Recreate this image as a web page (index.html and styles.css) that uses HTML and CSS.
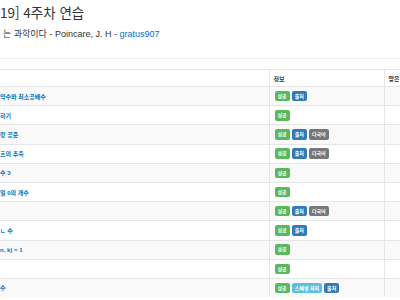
FILE: index.html
```html
<!DOCTYPE html>
<html lang="ko">
<head>
<meta charset="utf-8">
<title>4주차 연습</title>
<link rel="stylesheet" href="styles.css">
</head>
<body>
<div class="page">
  <header class="page-header">
    <h1 class="title">19] 4주차 연습</h1>
    <p class="quote">는 과학이다 - Poincare, J. H - <a class="user" href="#">gratus907</a></p>
  </header>
  <table class="problems">
    <colgroup>
      <col class="c-title">
      <col class="c-info">
      <col class="c-solved">
    </colgroup>
    <thead>
      <tr><th></th><th>정보</th><th>맞은</th></tr>
    </thead>
    <tbody>
      <tr><td><a href="#">약수와 최소공배수</a></td><td><span class="label ok">성공</span><span class="label src">출처</span></td><td></td></tr>
      <tr><td><a href="#">하기</a></td><td><span class="label ok">성공</span></td><td></td></tr>
      <tr><td><a href="#">랑 공준</a></td><td><span class="label ok">성공</span><span class="label src">출처</span><span class="label lang">다국어</span></td><td></td></tr>
      <tr><td><a href="#">흐의 추측</a></td><td><span class="label ok">성공</span><span class="label src">출처</span><span class="label lang">다국어</span></td><td></td></tr>
      <tr><td><a href="#">수 3</a></td><td><span class="label ok">성공</span></td><td></td></tr>
      <tr><td><a href="#">얼 0의 개수</a></td><td><span class="label ok">성공</span></td><td></td></tr>
      <tr><td></td><td><span class="label ok">성공</span><span class="label src">출처</span><span class="label lang">다국어</span></td><td></td></tr>
      <tr><td><a href="#">ㄴ 수</a></td><td><span class="label ok">성공</span><span class="label src">출처</span></td><td></td></tr>
      <tr><td><a href="#">n, k) = 1</a></td><td><span class="label ok">성공</span></td><td></td></tr>
      <tr><td></td><td><span class="label ok">성공</span></td><td></td></tr>
      <tr><td><a href="#">수</a></td><td><span class="label ok">성공</span><span class="label spj">스페셜 저지</span><span class="label src">출처</span></td><td></td></tr>
    </tbody>
  </table>
</div>
</body>
</html>
```
FILE: styles.css
```css
html, body {
  margin: 0;
  padding: 0;
  overflow: hidden;
  background: #fff;
}
body {
  font-family: "Liberation Sans", "Noto Sans CJK KR", sans-serif;
  color: #333;
}
.page {
  width: 470px;
}
.page-header {
  border-bottom: 1px solid #eee;
  padding: 4px 0 0 0;
  height: 54px;
}
.title {
  margin: 0;
  font-family: "Noto Sans CJK KR", "Liberation Sans", sans-serif;
  font-size: 13.5px;
  font-weight: 400;
  line-height: 17px;
  color: #333;
}
.quote {
  margin: 7px 0 0 3px;
  font-size: 9px;
  line-height: 12px;
  color: #333;
}
.user {
  color: #0076c0;
  text-decoration: none;
}
.problems {
  margin-top: 10px;
  width: 470px;
  table-layout: fixed;
  border-collapse: collapse;
  border-top: 1px solid #e6e6e6;
}
.c-title { width: 269px; }
.c-info { width: 115px; }
.problems th,
.problems td {
  padding: 0;
  border-top: 1px solid #e6e6e6;
  border-left: 1px solid #e6e6e6;
  text-align: left;
  vertical-align: middle;
  white-space: nowrap;
  overflow: hidden;
}
.problems th:first-child,
.problems td:first-child {
  border-left: none;
}
.problems th {
  height: 16px;
  font-size: 6px;
  font-weight: 700;
  color: #333;
  padding-left: 4px;
}
.problems th:first-child { padding-left: 0; }
.problems td {
  height: 18.2px;
  font-size: 6px;
}
.problems td:nth-child(2) {
  padding-left: 5px;
  font-size: 0;
}
.problems tbody tr:nth-child(odd) {
  background: #f9f9f9;
}
.problems td a {
  color: #0076c0;
  text-decoration: none;
  font-size: 6px;
  font-weight: 700;
}
.label {
  display: inline-block;
  vertical-align: middle;
  margin-right: 2px;
  padding: 0 3px;
  height: 10.5px;
  line-height: 10.5px;
  border-radius: 2px;
  font-size: 5px;
  font-weight: 700;
  color: #fff;
}
.ok { background: #5cb85c; }
.src { background: #337ab7; }
.lang { background: #777; }
.spj { background: #5bc0de; }
```
